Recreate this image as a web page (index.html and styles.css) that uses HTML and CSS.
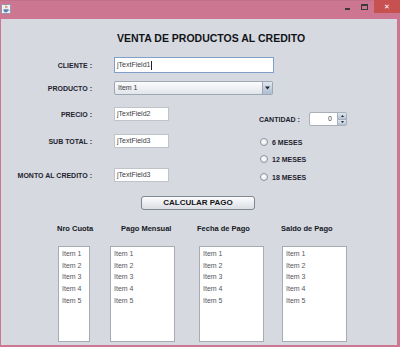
FILE: index.html
```html
<!DOCTYPE html>
<html lang="es">
<head>
<meta charset="utf-8">
<title>Venta de productos al credito</title>
<link rel="stylesheet" href="styles.css">
</head>
<body>
<div class="window">
  <div class="titlebar">
    <span class="app-icon">
      <svg width="10" height="10" viewBox="0 0 10 10">
        <rect x="0.5" y="0.5" width="9" height="9" rx="1" fill="#eef1f5" stroke="#8f99a6"/>
        <path d="M4.6 1.6c1 .9-.6 1.5.3 2.6M5.8 2.2c.6.6-.3 1 .2 1.7" stroke="#e0602a" stroke-width="0.9" fill="none"/>
        <path d="M2.6 5.2h4.4v1.6c0 .9-.8 1.5-2.2 1.5s-2.2-.6-2.2-1.5z" fill="#5b7fb0"/>
        <path d="M7 5.6h.6c.6 0 .6 1.1-.1 1.1H7" stroke="#5b7fb0" stroke-width="0.6" fill="none"/>
      </svg>
    </span>
    <div class="controls">
      <span class="ctl-min"></span>
      <span class="ctl-max"></span>
      <span class="ctl-close">&#x2715;</span>
    </div>
  </div>
  <div class="content">
    <h1 class="heading">VENTA DE PRODUCTOS AL CREDITO</h1>

    <div class="row row-cliente">
      <span class="lbl">CLIENTE :</span>
      <div class="field field-wide field-focus">jTextField1<span class="caret"></span></div>
    </div>

    <div class="row row-producto">
      <span class="lbl">PRODUCTO :</span>
      <div class="combo">
        <span class="combo-text">Item 1</span>
        <span class="combo-btn">
          <svg width="5" height="4" viewBox="0 0 5 4"><path d="M0 0.5h5L2.5 3.5z" fill="#1d2733"/></svg>
        </span>
      </div>
    </div>

    <div class="lower">
      <div class="lower-left">
        <div class="row row-precio">
          <span class="lbl">PRECIO :</span>
          <div class="field field-small">jTextField2</div>
        </div>
        <div class="row row-sub">
          <span class="lbl">SUB TOTAL :</span>
          <div class="field field-small">jTextField3</div>
        </div>
        <div class="row row-monto">
          <span class="lbl">MONTO AL CREDITO :</span>
          <div class="field field-small">jTextField3</div>
        </div>
      </div>
      <div class="lower-right">
        <div class="cantidad">
          <span class="lbl2">CANTIDAD :</span>
          <div class="spinner">
            <span class="spin-val">0</span>
            <span class="spin-btns">
              <span class="spin-b"><svg width="3" height="2" viewBox="0 0 3 2"><path d="M0 2h3L1.5 0z" fill="#1d2733"/></svg></span>
              <span class="spin-b"><svg width="3" height="2" viewBox="0 0 3 2"><path d="M0 0h3L1.5 2z" fill="#1d2733"/></svg></span>
            </span>
          </div>
        </div>
        <div class="radio r1"><span class="radio-dot"></span>6 MESES</div>
        <div class="radio r2"><span class="radio-dot"></span>12 MESES</div>
        <div class="radio r3"><span class="radio-dot"></span>18 MESES</div>
      </div>
    </div>

    <div class="btn-row"><button class="btn">CALCULAR PAGO</button></div>

    <div class="headers">
      <span class="hdr hdr1">Nro Cuota</span>
      <span class="hdr hdr2">Pago Mensual</span>
      <span class="hdr hdr3">Fecha de Pago</span>
      <span class="hdr hdr4">Saldo de Pago</span>
    </div>

    <div class="lists">
      <ul class="list list1"><li>Item 1</li><li>Item 2</li><li>Item 3</li><li>Item 4</li><li>Item 5</li></ul>
      <ul class="list list2"><li>Item 1</li><li>Item 2</li><li>Item 3</li><li>Item 4</li><li>Item 5</li></ul>
      <ul class="list list3"><li>Item 1</li><li>Item 2</li><li>Item 3</li><li>Item 4</li><li>Item 5</li></ul>
      <ul class="list list4"><li>Item 1</li><li>Item 2</li><li>Item 3</li><li>Item 4</li><li>Item 5</li></ul>
    </div>
  </div>
</div>
</body>
</html>
```

FILE: styles.css
```css
* { box-sizing: border-box; }

html, body {
  margin: 0;
  padding: 0;
  background: #ffffff;
}

body {
  font-family: "Liberation Sans", Arial, sans-serif;
  color: #1c1f26;
}

.window {
  width: 400px;
  height: 347px;
  background: #cc7692;
  display: flex;
  flex-direction: column;
}

/* ---------- title bar ---------- */
.titlebar {
  height: 19px;
  flex: none;
  display: flex;
  align-items: flex-start;
  justify-content: space-between;
  background: #cc7692;
  border-top: 1px solid #c0708b;
}

.app-icon {
  display: block;
  width: 10px;
  height: 10px;
  margin: 3px 0 0 1px;
}

.app-icon svg { display: block; }

.controls {
  display: flex;
  align-items: flex-start;
  height: 13px;
}

.ctl-min {
  display: block;
  width: 5px;
  height: 2px;
  background: #3a3a3e;
  margin: 7px 11px 0 0;
}

.ctl-max {
  display: block;
  width: 7px;
  height: 6px;
  border: 1px solid #3a3a3e;
  border-top-width: 2px;
  margin: 3px 6px 0 0;
}

.ctl-close {
  display: flex;
  align-items: center;
  justify-content: center;
  width: 26px;
  height: 13px;
  margin-top: -1px;
  background: #c75050;
  color: #ffffff;
  font-family: "DejaVu Sans", sans-serif;
  font-size: 7px;
  font-weight: bold;
}

/* ---------- content ---------- */
.content {
  flex: 1;
  margin: 0 3px 2px 1px;
  background: #d6d9df;
  display: flex;
  flex-direction: column;
}

.heading {
  margin: 12px 0 0 116px;
  height: 14px;
  line-height: 14px;
  font-size: 10.5px;
  font-weight: bold;
  color: #111318;
  white-space: nowrap;
}

.row {
  display: flex;
  align-items: center;
}

.lbl {
  width: 91px;
  margin-right: 22px;
  text-align: right;
  font-size: 7px;
  font-weight: bold;
  color: #1e2330;
  white-space: nowrap;
}

.row-cliente { margin-top: 12px; }
.row-producto { margin-top: 8px; }

.field {
  height: 14px;
  background: #ffffff;
  border: 1px solid #bfc4cb;
  padding-left: 2px;
  font-size: 7px;
  line-height: 12px;
  color: #3a3d44;
  display: flex;
  align-items: center;
  white-space: nowrap;
}

.field-wide {
  width: 160px;
  height: 16px;
}

.field-focus {
  border-color: #7f9fc8;
}

.caret {
  display: block;
  width: 1px;
  height: 9px;
  background: #222;
  margin-left: 0.5px;
}

.field-small { width: 55px; }

.combo {
  width: 159px;
  height: 14px;
  display: flex;
  border: 1px solid #9ea7b2;
  border-radius: 2px;
  background: linear-gradient(#fbfcfd, #e1e5eb);
}

.combo-text {
  flex: 1;
  padding-left: 3px;
  font-size: 7px;
  line-height: 12px;
  color: #3a3d44;
}

.combo-btn {
  width: 10px;
  display: flex;
  align-items: center;
  justify-content: center;
  border-left: 1px solid #9ea7b2;
  background: linear-gradient(#dfe6ef, #aebdd0);
}

.combo-btn svg { display: block; }

/* ---------- lower form ---------- */
.lower {
  margin-top: 12px;
  display: flex;
}

.lower-left {
  width: 168px;
  flex: none;
}

.row-sub { margin-top: 13px; }
.row-monto { margin-top: 20px; }

.lower-right {
  margin-left: 90px;
  display: flex;
  flex-direction: column;
}

.cantidad {
  margin-top: 5px;
  height: 14px;
  display: flex;
  align-items: center;
}

.lbl2 {
  font-size: 7px;
  font-weight: bold;
  color: #1e2330;
  white-space: nowrap;
  width: 50px;
}

.spinner {
  width: 38px;
  height: 14px;
  display: flex;
  border: 1px solid #a9b0ba;
  border-radius: 2px;
  background: #ffffff;
}

.spin-val {
  flex: 1;
  text-align: right;
  padding-right: 5px;
  font-size: 7px;
  line-height: 12px;
  color: #3a3d44;
}

.spin-btns {
  width: 9px;
  display: flex;
  flex-direction: column;
  border-left: 1px solid #a9b0ba;
}

.spin-b {
  flex: 1;
  display: flex;
  align-items: center;
  justify-content: center;
  background: linear-gradient(#dfe6ef, #b3c1d3);
}

.spin-b + .spin-b { border-top: 1px solid #a9b0ba; }

.spin-b svg { display: block; }

.radio {
  height: 10px;
  display: flex;
  align-items: center;
  font-size: 7px;
  font-weight: bold;
  color: #1e2330;
  white-space: nowrap;
}

.r1 { margin-top: 11px; }
.r2 { margin-top: 7px; }
.r3 { margin-top: 8px; }

.radio-dot {
  width: 8px;
  height: 8px;
  margin: 0 4px 0 1px;
  border-radius: 50%;
  border: 1px solid #8c929c;
  background: radial-gradient(circle at 40% 35%, #ffffff, #dde1e7);
}

/* ---------- button ---------- */
.btn-row {
  margin-top: 14px;
  padding-left: 140px;
  display: flex;
}

.btn {
  width: 114px;
  height: 14px;
  padding: 0;
  border: 1px solid #80868f;
  border-radius: 3px;
  background: linear-gradient(#fdfdfe, #dadde2);
  font-family: "Liberation Sans", Arial, sans-serif;
  font-size: 8px;
  font-weight: bold;
  color: #111318;
  line-height: 12px;
}

/* ---------- table-like lists ---------- */
.headers {
  margin-top: 13px;
  height: 10px;
  padding-left: 56px;
  display: flex;
  align-items: center;
}

.hdr {
  font-size: 7.5px;
  font-weight: bold;
  color: #15181f;
  white-space: nowrap;
}

.hdr1 { width: 64px; }
.hdr2 { width: 76px; }
.hdr3 { width: 84px; }

.lists {
  margin-top: 13px;
  padding-left: 57px;
  display: flex;
}

.list {
  margin: 0;
  padding: 1px 0 0 3px;
  list-style: none;
  height: 96px;
  background: #ffffff;
  border: 1px solid #a7acb4;
  font-size: 7px;
  line-height: 11.7px;
  color: #55585e;
}

.list1 { width: 32px; }
.list2 { width: 65px; margin-left: 20px; }
.list3 { width: 65px; margin-left: 24px; }
.list4 { width: 65px; margin-left: 18px; }
```
